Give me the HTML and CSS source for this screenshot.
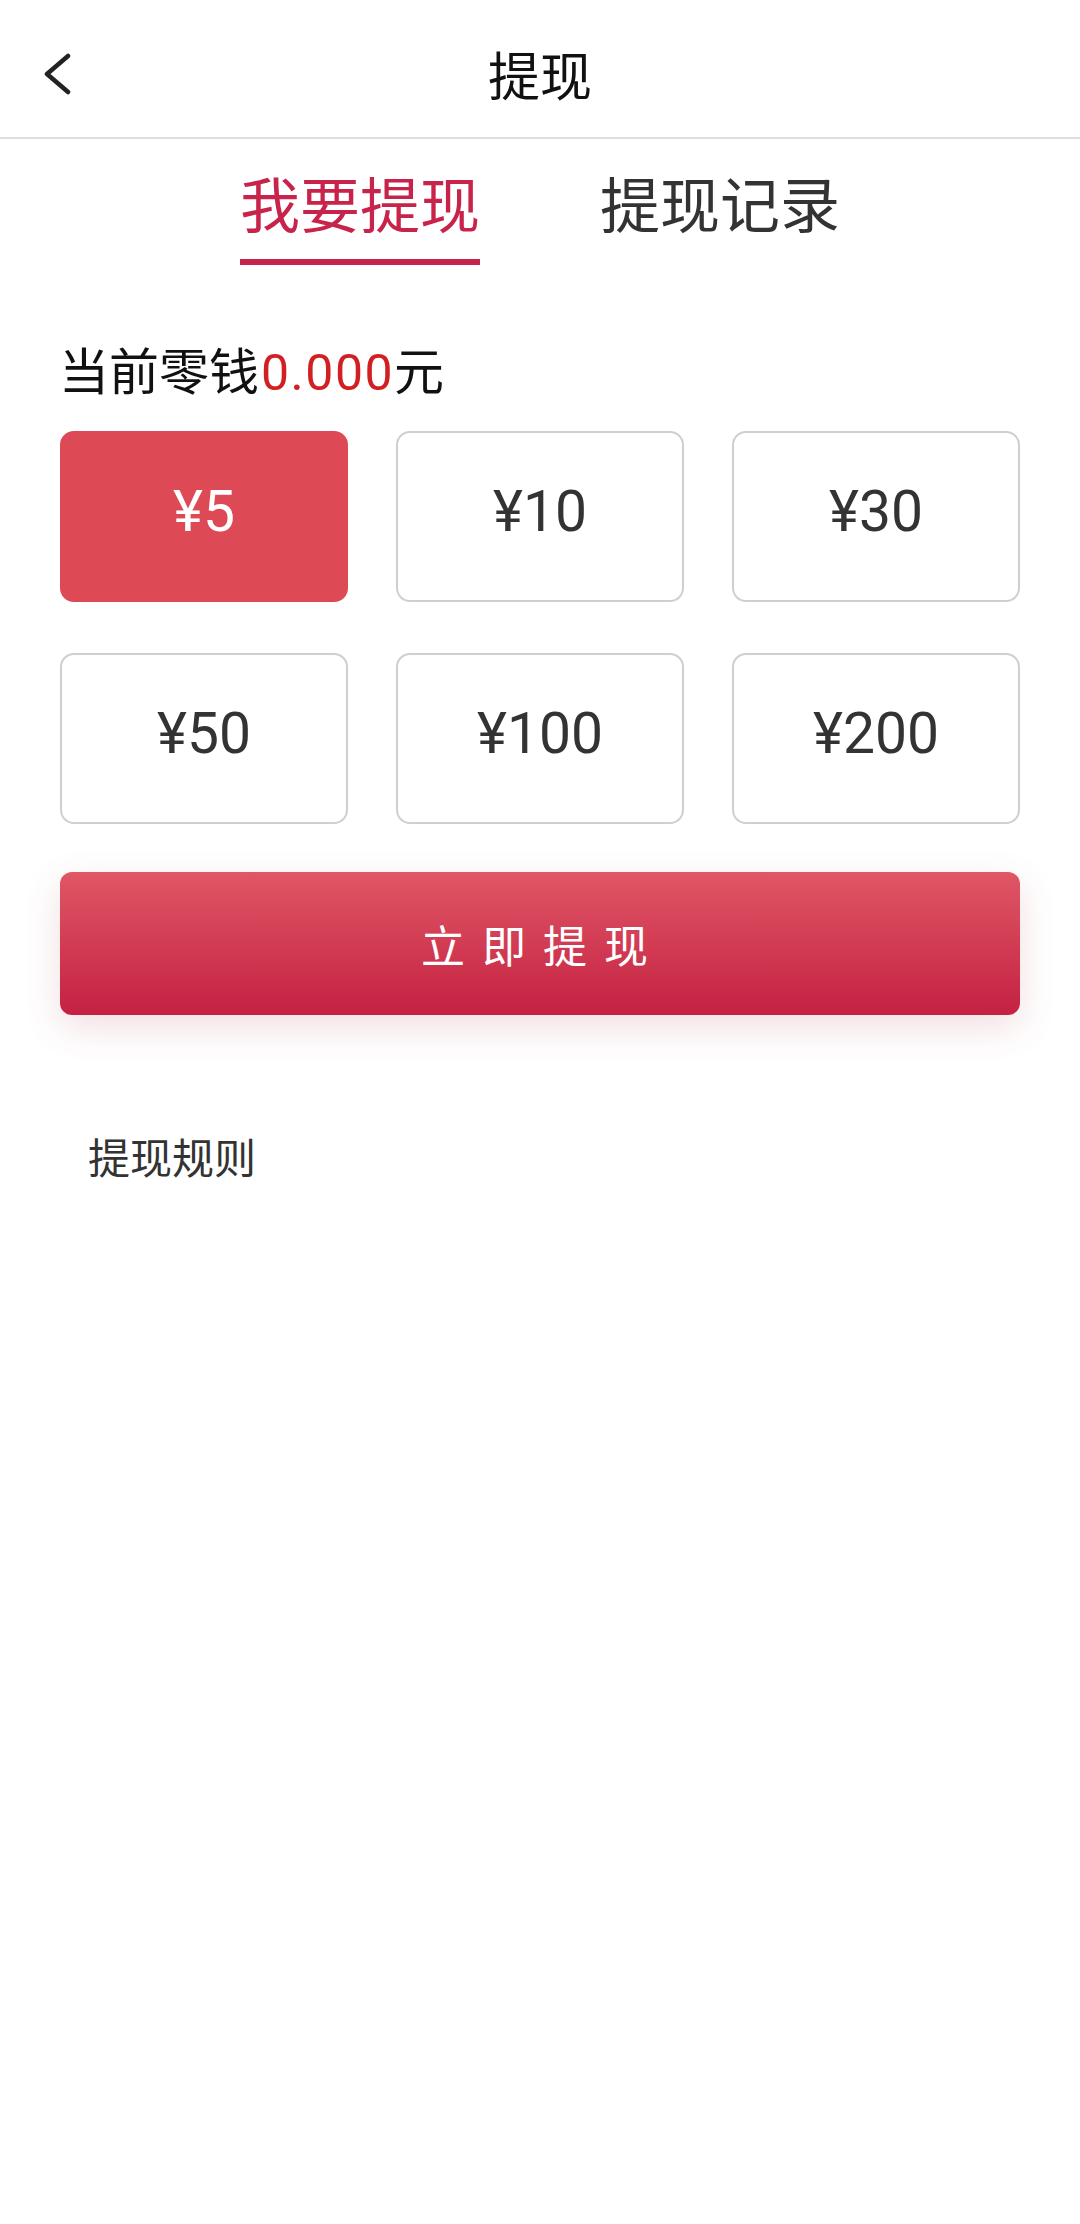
FILE: index.html
```html
<!DOCTYPE html>
<html lang="zh">
<head>
<meta charset="utf-8">
<title>提现</title>
<link rel="stylesheet" href="styles.css">
</head>
<body>
<div class="page">
  <header class="topbar">
    <div class="back">
      <svg width="28" height="42" viewBox="0 0 28 42"><path d="M25 3 L4 21 L25 39" fill="none" stroke="#222" stroke-width="4.5" stroke-linecap="round" stroke-linejoin="round"/></svg>
    </div>
    <h1 class="title">提现</h1>
    <div></div>
  </header>
  <nav class="tabs">
    <div class="tab active"><span class="tab-label">我要提现</span><span class="tab-bar"></span></div>
    <div class="tab"><span class="tab-label">提现记录</span><span class="tab-bar"></span></div>
  </nav>
  <section class="content">
    <p class="balance">当前零钱<span class="amount">0.000</span>元</p>
    <div class="grid">
      <div class="opt selected">¥5</div>
      <div class="opt">¥10</div>
      <div class="opt">¥30</div>
      <div class="opt">¥50</div>
      <div class="opt">¥100</div>
      <div class="opt">¥200</div>
    </div>
    <button class="submit">立即提现</button>
    <p class="rules">提现规则</p>
  </section>
</div>
</body>
</html>
```
FILE: styles.css
```css
* { box-sizing: border-box; }
html, body { margin: 0; padding: 0; background: #fff; }
body {
  width: 1080px;
  min-height: 2224px;
  font-family: "Noto Sans CJK SC", "Noto Sans", Roboto, sans-serif;
  color: #111;
}
.topbar {
  height: 139px;
  padding-top: 10px;
  border-bottom: 2px solid #dedede;
  display: grid;
  grid-template-columns: 1fr auto 1fr;
  align-items: center;
}
.back {
  padding-left: 43px;
  display: flex;
  align-items: center;
}
.back svg { display: block; }
.title {
  margin: 0;
  font-size: 52px;
  line-height: 1;
  font-weight: 400;
  color: #111;
}
.tabs {
  display: flex;
  justify-content: center;
  gap: 120px;
  padding-top: 33px;
}
.tab {
  display: flex;
  flex-direction: column;
  align-items: stretch;
}
.tab-label {
  font-size: 60px;
  line-height: 1;
  color: #333;
  width: 240px;
  text-align: center;
}
.tab-bar {
  margin-top: 27px;
  height: 6px;
  background: transparent;
}
.tab.active .tab-label { color: #c8234b; }
.tab.active .tab-bar { background: #c8234b; }
.content {
  padding: 0 60px;
}
.balance {
  margin: 78px 0 0 -1px;
  height: 50px;
  font-size: 50px;
  line-height: 50px;
  color: #111;
  white-space: nowrap;
}
.amount {
  color: #d21f22;
  font-family: Roboto, "Noto Sans", sans-serif;
  letter-spacing: 1.5px;
  padding: 0 0 0 2px;
}
.grid {
  margin-top: 38px;
  display: grid;
  grid-template-columns: repeat(3, 1fr);
  grid-auto-rows: 171px;
  column-gap: 48px;
  row-gap: 51px;
}
.opt {
  border: 2px solid #cfcfcf;
  border-radius: 14px;
  display: flex;
  align-items: center;
  justify-content: center;
  font-family: Roboto, "Noto Sans", sans-serif;
  font-size: 57px;
  color: #333;
  padding-bottom: 10px;
}
.opt.selected {
  background: #dd4a55;
  border-color: #dd4a55;
  color: #fff;
}
.submit {
  display: block;
  width: 100%;
  height: 143px;
  margin-top: 48px;
  border: none;
  border-radius: 12px;
  background: linear-gradient(to bottom, #e05765, #c42142);
  box-shadow: 0 12px 36px rgba(170, 50, 60, 0.16);
  color: #fff;
  font-family: "Noto Sans CJK SC", sans-serif;
  font-size: 44px;
  letter-spacing: 17px;
  text-indent: 6px;
  line-height: 1;
  padding: 0;
}
.rules {
  margin: 120px 0 0 28px;
  font-size: 42px;
  line-height: 1;
  color: #333;
}
```
